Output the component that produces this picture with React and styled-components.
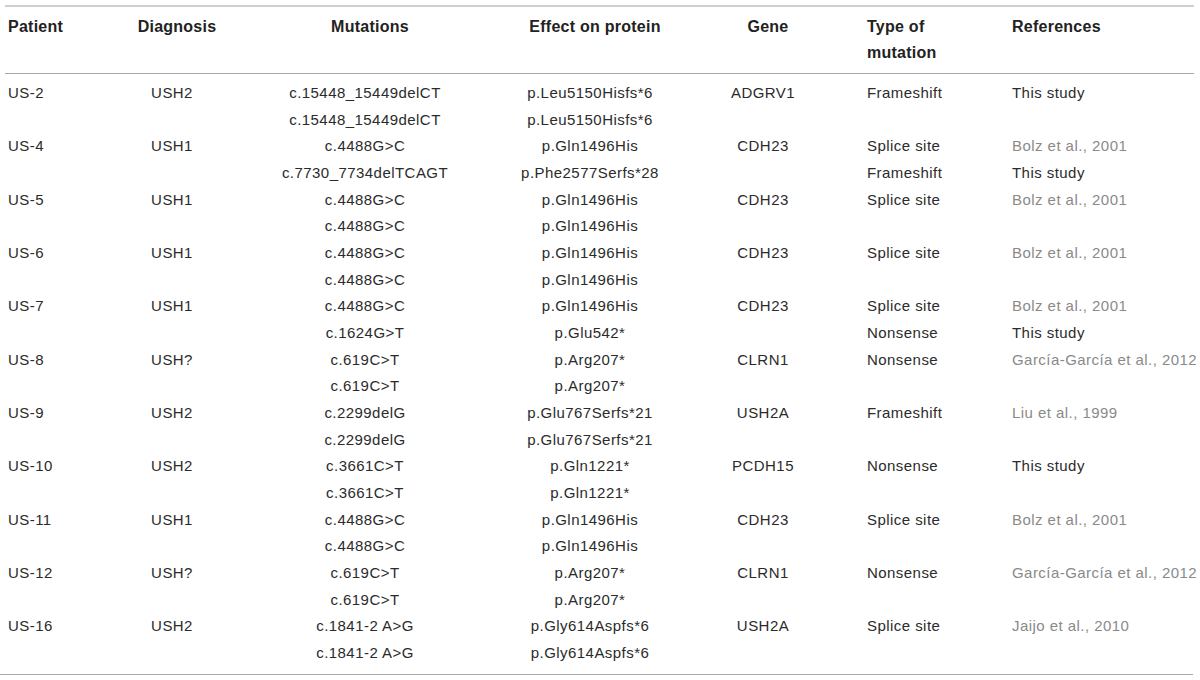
import React from 'react';
import styled, { createGlobalStyle } from 'styled-components';

const Global = createGlobalStyle`
  body {
    margin: 0;
    background: #fff;
    font-family: "Liberation Sans", Arial, sans-serif;
    color: #2b2b2b;
  }
`;

const Table = styled.div`
  width: 1200px;
  height: 680px;
  padding-top: 5px;
  box-sizing: border-box;
`;

const Grid = styled.div`
  display: grid;
  grid-template-columns: 120px 104px 282px 168px 178px 148px 1fr;
  font-size: 15px;
  letter-spacing: 0.45px;
  line-height: 26.67px;
`;

const Head = styled(Grid)`
  margin: 0 6px 0 5px;
  border-top: 2px solid #cfcfcf;
  border-bottom: 1px solid #a8a8a8;
  padding: 7px 0 7px;
  line-height: 26px;
  font-size: 16px;
  letter-spacing: 0.25px;
  font-weight: bold;
  color: #222;
`;

const Body = styled.div`
  border-bottom: 1px solid #a8a8a8;
  margin-right: 7px;
  padding: 6px 0 7px;
`;

const Row = styled(Grid)``;

const Cell = styled.div`
  text-align: ${p => (p.$center ? 'center' : 'left')};
  padding-left: ${p => p.$pad || 0}px;
  white-space: nowrap;
`;

const Line = styled.div`
  color: ${p => (p.$muted ? '#8a8a8a' : '#2b2b2b')};
`;

const bolz = { t: 'Bolz et al., 2001', m: true };
const garcia = { t: 'García-García et al., 2012', m: true };
const study = { t: 'This study' };

const rows = [
  ['US-2', 'USH2', ['c.15448_15449delCT', 'c.15448_15449delCT'], ['p.Leu5150Hisfs*6', 'p.Leu5150Hisfs*6'], 'ADGRV1', ['Frameshift'], [study]],
  ['US-4', 'USH1', ['c.4488G>C', 'c.7730_7734delTCAGT'], ['p.Gln1496His', 'p.Phe2577Serfs*28'], 'CDH23', ['Splice site', 'Frameshift'], [bolz, study]],
  ['US-5', 'USH1', ['c.4488G>C', 'c.4488G>C'], ['p.Gln1496His', 'p.Gln1496His'], 'CDH23', ['Splice site'], [bolz]],
  ['US-6', 'USH1', ['c.4488G>C', 'c.4488G>C'], ['p.Gln1496His', 'p.Gln1496His'], 'CDH23', ['Splice site'], [bolz]],
  ['US-7', 'USH1', ['c.4488G>C', 'c.1624G>T'], ['p.Gln1496His', 'p.Glu542*'], 'CDH23', ['Splice site', 'Nonsense'], [bolz, study]],
  ['US-8', 'USH?', ['c.619C>T', 'c.619C>T'], ['p.Arg207*', 'p.Arg207*'], 'CLRN1', ['Nonsense'], [garcia]],
  ['US-9', 'USH2', ['c.2299delG', 'c.2299delG'], ['p.Glu767Serfs*21', 'p.Glu767Serfs*21'], 'USH2A', ['Frameshift'], [{ t: 'Liu et al., 1999', m: true }]],
  ['US-10', 'USH2', ['c.3661C>T', 'c.3661C>T'], ['p.Gln1221*', 'p.Gln1221*'], 'PCDH15', ['Nonsense'], [study]],
  ['US-11', 'USH1', ['c.4488G>C', 'c.4488G>C'], ['p.Gln1496His', 'p.Gln1496His'], 'CDH23', ['Splice site'], [bolz]],
  ['US-12', 'USH?', ['c.619C>T', 'c.619C>T'], ['p.Arg207*', 'p.Arg207*'], 'CLRN1', ['Nonsense'], [garcia]],
  ['US-16', 'USH2', ['c.1841-2 A>G', 'c.1841-2 A>G'], ['p.Gly614Aspfs*6', 'p.Gly614Aspfs*6'], 'USH2A', ['Splice site'], [{ t: 'Jaijo et al., 2010', m: true }]],
];

export default function App() {
  return (
    <Table>
      <Global />
      <Head>
        <Cell $pad={3}>Patient</Cell>
        <Cell $center>Diagnosis</Cell>
        <Cell $center>Mutations</Cell>
        <Cell $center>Effect on protein</Cell>
        <Cell $center>Gene</Cell>
        <Cell $pad={10}>Type of<br />mutation</Cell>
        <Cell $pad={7}>References</Cell>
      </Head>
      <Body>
        {rows.map(([pat, dx, muts, eff, gene, type, refs]) => (
          <Row key={pat}>
            <Cell $pad={8}>{pat}</Cell>
            <Cell $center>{dx}</Cell>
            <Cell $center>{muts.map((m, i) => <Line key={i}>{m}</Line>)}</Cell>
            <Cell $center>{eff.map((m, i) => <Line key={i}>{m}</Line>)}</Cell>
            <Cell $center>{gene}</Cell>
            <Cell $pad={15}>{type.map((m, i) => <Line key={i}>{m}</Line>)}</Cell>
            <Cell $pad={12}>{refs.map((r, i) => <Line key={i} $muted={r.m}>{r.t}</Line>)}</Cell>
          </Row>
        ))}
      </Body>
    </Table>
  );
}
